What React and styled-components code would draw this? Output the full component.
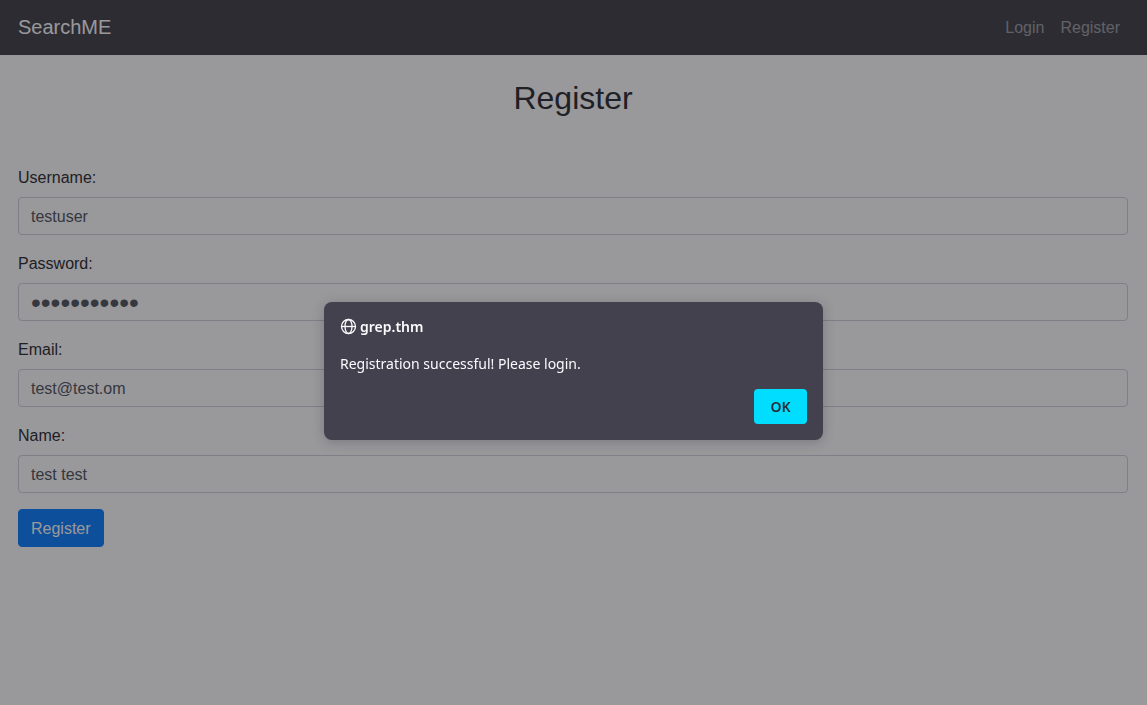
import React from "react";
import styled, { createGlobalStyle } from "styled-components";

const GlobalStyle = createGlobalStyle`
  *, *::before, *::after { box-sizing: border-box; }
  body {
    margin: 0;
    background: #fff;
    color: #212529;
    font: 16px/24px "Liberation Sans", Arial, sans-serif;
  }
`;

const Navbar = styled.nav`
  display: flex;
  align-items: center;
  justify-content: space-between;
  padding: 8px 19px 7px 18px;
  background: #393b41;
`;

const Brand = styled.a`
  padding-bottom: 2px;
  color: #fff;
  font-size: 20px;
  line-height: 30px;
  text-decoration: none;
`;

const NavLinks = styled.div`
  display: flex;
`;

const NavLink = styled.a`
  padding: 8px;
  color: rgba(255, 255, 255, 0.5);
  text-decoration: none;
`;

const Content = styled.main`
  padding: 24px 19px 24px 18px;
`;

const Title = styled.h2`
  margin: 0 0 48px;
  font-size: 32px;
  font-weight: 400;
  line-height: 38px;
  text-align: center;
`;

const Group = styled.div`
  margin-bottom: 16px;
`;

const Label = styled.label`
  display: block;
  margin-bottom: 6px;
  line-height: 26px;
`;

const Input = styled.input`
  display: block;
  width: 100%;
  height: 38px;
  padding: 7px 12px 5px;
  border: 1px solid #ced4da;
  border-radius: 4px;
  background: #fff;
  color: #495057;
  font: inherit;

  &[type="password"] {
    font-size: 28px;
  }
`;

const Submit = styled.button`
  padding: 7px 12px 5px;
  border: 1px solid #007bff;
  border-radius: 4px;
  background: #007bff;
  color: #fff;
  font: inherit;
`;

const Overlay = styled.div`
  position: fixed;
  inset: 0;
  display: flex;
  align-items: center;
  justify-content: center;
  padding-top: 37px;
  background: rgba(28, 27, 34, 0.45);
`;

const Dialog = styled.div`
  width: 499px;
  max-width: 100%;
  padding: 16px;
  border-radius: 8px;
  background: #42414d;
  color: #fbfbfe;
  box-shadow: 0 2px 12px rgba(28, 27, 34, 0.25);
  font: 14px/18px "Noto Sans", sans-serif;
`;

const Origin = styled.div`
  display: flex;
  align-items: center;
  gap: 3px;
  font-weight: 600;
`;

const GlobeIcon = styled.svg`
  width: 17px;
  height: 17px;
  margin-bottom: 1px;
`;

const Message = styled.p`
  margin: 19px 0 16px;
`;

const Actions = styled.div`
  display: flex;
  justify-content: flex-end;
`;

const OkButton = styled.button`
  min-width: 53px;
  height: 35px;
  padding: 0 16px;
  border: 0;
  border-radius: 4px;
  background: #00ddff;
  color: #2b2a33;
  font: inherit;
  font-weight: 600;
`;

const fields = [
  { id: "username", label: "Username:", type: "text", value: "testuser" },
  { id: "password", label: "Password:", type: "password", value: "testtest123" },
  { id: "email", label: "Email:", type: "email", value: "test@test.om" },
  { id: "name", label: "Name:", type: "text", value: "test test" },
];

export default function App() {
  return (
    <>
      <GlobalStyle />
      <Navbar>
        <Brand href="#">SearchME</Brand>
        <NavLinks>
          <NavLink href="#login">Login</NavLink>
          <NavLink href="#register">Register</NavLink>
        </NavLinks>
      </Navbar>
      <Content>
        <Title>Register</Title>
        <form>
          {fields.map((f) => (
            <Group key={f.id}>
              <Label htmlFor={f.id}>{f.label}</Label>
              <Input id={f.id} type={f.type} defaultValue={f.value} />
            </Group>
          ))}
          <Submit type="submit">Register</Submit>
        </form>
      </Content>
      <Overlay>
        <Dialog role="alertdialog" aria-labelledby="origin" aria-describedby="message">
          <Origin>
            <GlobeIcon viewBox="0 0 17 17" fill="none" stroke="currentColor" strokeWidth="1.3" aria-hidden="true">
              <circle cx="8.5" cy="8.5" r="7" />
              <ellipse cx="8.5" cy="8.5" rx="3.5" ry="7" />
              <path d="M1.5 8.5h14" />
            </GlobeIcon>
            <span id="origin">grep.thm</span>
          </Origin>
          <Message id="message">Registration successful! Please login.</Message>
          <Actions>
            <OkButton type="button">OK</OkButton>
          </Actions>
        </Dialog>
      </Overlay>
    </>
  );
}
